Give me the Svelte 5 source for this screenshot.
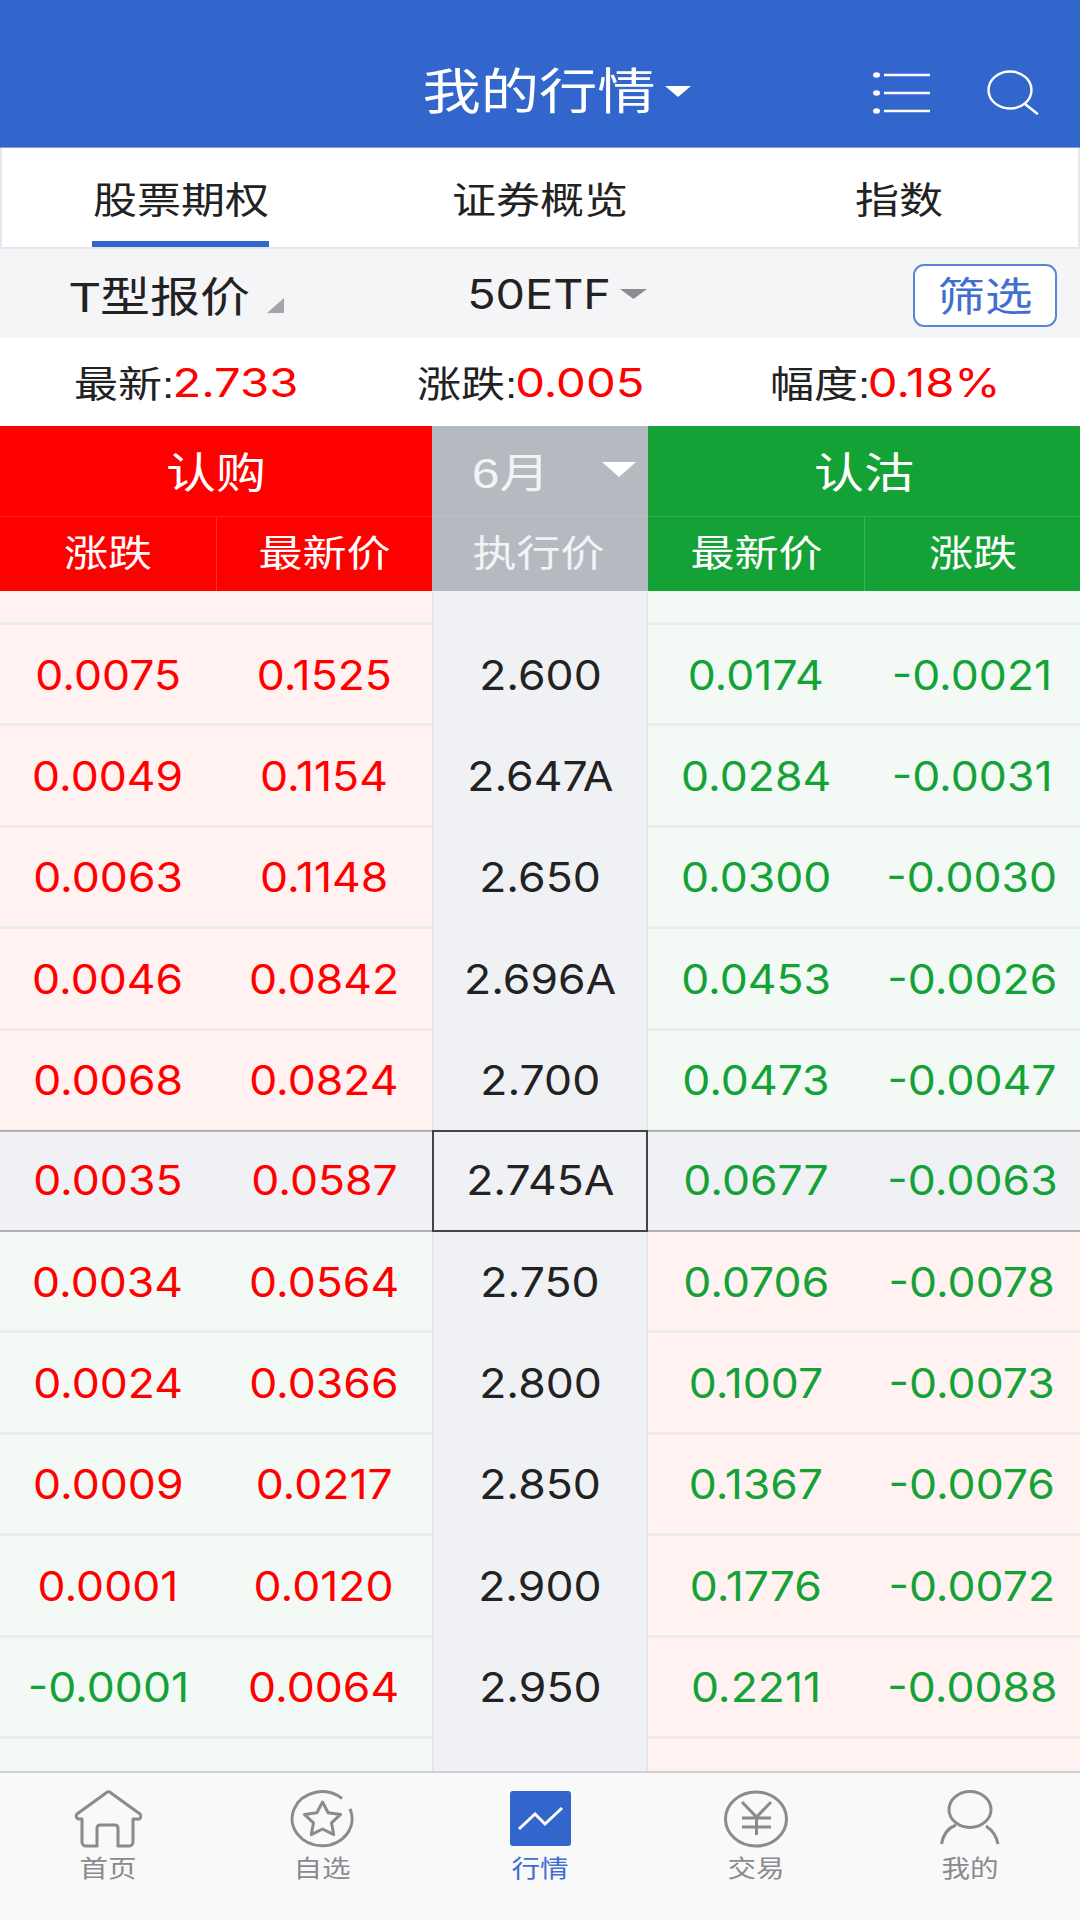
<script lang="ts">
	type Row = { strike: string; callChg: string; callLast: string; putLast: string; putChg: string; atm?: boolean; otm?: boolean };

	const rows: Row[] = [
		{ callChg: '0.0075', callLast: '0.1525', strike: '2.600', putLast: '0.0174', putChg: '-0.0021' },
		{ callChg: '0.0049', callLast: '0.1154', strike: '2.647A', putLast: '0.0284', putChg: '-0.0031' },
		{ callChg: '0.0063', callLast: '0.1148', strike: '2.650', putLast: '0.0300', putChg: '-0.0030' },
		{ callChg: '0.0046', callLast: '0.0842', strike: '2.696A', putLast: '0.0453', putChg: '-0.0026' },
		{ callChg: '0.0068', callLast: '0.0824', strike: '2.700', putLast: '0.0473', putChg: '-0.0047' },
		{ callChg: '0.0035', callLast: '0.0587', strike: '2.745A', putLast: '0.0677', putChg: '-0.0063', atm: true },
		{ callChg: '0.0034', callLast: '0.0564', strike: '2.750', putLast: '0.0706', putChg: '-0.0078', otm: true },
		{ callChg: '0.0024', callLast: '0.0366', strike: '2.800', putLast: '0.1007', putChg: '-0.0073', otm: true },
		{ callChg: '0.0009', callLast: '0.0217', strike: '2.850', putLast: '0.1367', putChg: '-0.0076', otm: true },
		{ callChg: '0.0001', callLast: '0.0120', strike: '2.900', putLast: '0.1776', putChg: '-0.0072', otm: true },
		{ callChg: '-0.0001', callLast: '0.0064', strike: '2.950', putLast: '0.2211', putChg: '-0.0088', otm: true }
	];

	const tone = (v: string) => (v.startsWith('-') ? 'down' : 'up');
</script>

<div class="screen">
	<header class="topbar">
		<div class="title"><span class="x">我的行情</span></div>
		<svg class="title-caret" width="26" height="11" viewBox="0 0 26 11"><path d="M0 0H26L13 11Z" fill="#fff" /></svg>
		<svg class="menu-icon" width="58" height="42" viewBox="0 0 58 42" fill="none" stroke="#fff" stroke-width="2.4">
			<g fill="#fff" stroke="none">
				<ellipse cx="3.5" cy="3" rx="3.5" ry="2.8" />
				<ellipse cx="3.5" cy="21" rx="3.5" ry="2.8" />
				<ellipse cx="3.5" cy="39" rx="3.5" ry="2.8" />
			</g>
			<path d="M11 3H57M11 21H57M11 39H57" />
		</svg>
		<svg class="search-icon" width="52" height="45" viewBox="0 0 52 45" fill="none" stroke="#fff" stroke-width="2.4" stroke-linecap="round">
			<ellipse cx="23" cy="20" rx="21.5" ry="18.5" />
			<path d="M38 34L50 43.500" />
		</svg>
	</header>

	<nav class="tabs">
		<div class="tab tab--on"><span class="x">股票期权</span></div>
		<div class="tab"><span class="x">证券概览</span></div>
		<div class="tab"><span class="x">指数</span></div>
	</nav>

	<div class="filter">
		<div class="filter__type">
			<span class="x">T型报价</span>
			<svg class="corner" width="17" height="15" viewBox="0 0 17 15"><path d="M17 0V15H0Z" fill="#a4a4a9" /></svg>
		</div>
		<div class="filter__under">
			<span class="n">50ETF</span>
			<svg class="under-caret" width="27" height="10" viewBox="0 0 27 10"><path d="M0 0H27L13.500 10Z" fill="#8b8b90" /></svg>
		</div>
		<button class="filter__btn"><span class="x">筛选</span></button>
	</div>

	<div class="quote">
		<div class="quote__item"><span class="x">最新:</span><span class="n">2.733</span></div>
		<div class="quote__item"><span class="x">涨跌:</span><span class="n">0.005</span></div>
		<div class="quote__item"><span class="x">幅度:</span><span class="n">0.18%</span></div>
	</div>

	<div class="thead">
		<div class="thead__top call"><span class="x">认购</span></div>
		<div class="thead__top mid">
			<span class="x month">6月</span>
			<svg class="month-caret" width="34" height="15" viewBox="0 0 34 15"><path d="M0 0H34L17 15Z" fill="#fff" /></svg>
		</div>
		<div class="thead__top put"><span class="x">认沽</span></div>
		<div class="thead__sub call two">
			<div><span class="x">涨跌</span></div>
			<div><span class="x">最新价</span></div>
		</div>
		<div class="thead__sub mid"><span class="x">执行价</span></div>
		<div class="thead__sub put two">
			<div><span class="x">最新价</span></div>
			<div><span class="x">涨跌</span></div>
		</div>
	</div>

	<div class="tbody">
		<div class="row row--stub">
			<div class="side side--pink"></div>
			<div class="strike"></div>
			<div class="side side--green"></div>
		</div>
		{#each rows as r (r.strike)}
			<div class="row" class:row--atm={r.atm}>
				<div class="side" class:side--pink={!r.otm} class:side--green={r.otm}>
					<div class={tone(r.callChg)}><span class="n">{r.callChg}</span></div>
					<div class={tone(r.callLast)}><span class="n">{r.callLast}</span></div>
				</div>
				<div class="strike"><span class="n">{r.strike}</span></div>
				<div class="side" class:side--green={!r.otm} class:side--pink={r.otm}>
					<div class="down"><span class="n">{r.putLast}</span></div>
					<div class="down"><span class="n">{r.putChg}</span></div>
				</div>
			</div>
		{/each}
		<div class="row">
			<div class="side side--green"></div>
			<div class="strike"></div>
			<div class="side side--pink"></div>
		</div>
	</div>

	<footer class="tabbar">
		<div class="tabbar__item">
			<svg width="68" height="58" viewBox="0 0 68 58" fill="none" stroke="#8a8a8f" stroke-width="3" stroke-linejoin="round">
				<path d="M8 29V52a4 4 0 0 0 4 4H23V38a3 3 0 0 1 3-3H41a3 3 0 0 1 3 3V56H55a4 4 0 0 0 4-4V29H63a3 3 0 0 0 3-5L37 3a3 3 0 0 0-5 0L3 24a3 3 0 0 0 2 5Z" />
			</svg>
			<span class="x">首页</span>
		</div>
		<div class="tabbar__item tabbar__item--nudge">
			<svg width="64" height="58" viewBox="0 0 64 58" fill="none" stroke="#8a8a8f" stroke-width="3" stroke-linejoin="round">
				<path d="M52 8.500A30 27 0 1 0 60 18.800" />
				<path d="M32.500 12L38.100 22.700L50.600 24.400L41.500 32.800L43.700 44.600L32.500 39L21.300 44.600L23.500 32.800L14.400 24.400L26.900 22.700Z" />
			</svg>
			<span class="x">自选</span>
		</div>
		<div class="tabbar__item tabbar__item--on">
			<svg width="61" height="58" viewBox="0 0 61 58" fill="none">
				<rect x="0" y="1" width="61" height="55" rx="3" fill="#3366cc" />
				<path d="M9 39L25 24L35 34L52 18" stroke="#fff" stroke-width="3" />
			</svg>
			<span class="x">行情</span>
		</div>
		<div class="tabbar__item">
			<svg width="64" height="58" viewBox="0 0 64 58" fill="none" stroke="#8a8a8f" stroke-width="3">
				<ellipse cx="32" cy="29" rx="30.500" ry="27" />
				<path d="M18 12L32.500 27L47 12M18 28H47M18 37H47M32.500 27V45" />
			</svg>
			<span class="x">交易</span>
		</div>
		<div class="tabbar__item tabbar__item--nudge">
			<svg width="60" height="58" viewBox="0 0 60 58" fill="none" stroke="#8a8a8f" stroke-width="3">
				<ellipse cx="30" cy="19.500" rx="21" ry="18" />
				<path d="M16 35C8 38 3 45 1.500 54M46 36C52 40 56.500 46 58 54" />
			</svg>
			<span class="x">我的</span>
		</div>
	</footer>
</div>

<style>
	:global(body) {
		margin: 0;
		background: #fff;
	}

	.screen {
		width: 1080px;
		height: 1920px;
		display: flex;
		flex-direction: column;
		overflow: hidden;
		font-family: 'Liberation Sans', 'Noto Sans CJK SC', sans-serif;
		color: #222;
	}

	/* the whole reference is stretched sideways, text included */
	.x {
		display: inline-block;
		transform: scaleX(1.19);
		white-space: nowrap;
	}

	/* numbers: Inter has the narrow 1 the reference shows */
	.n {
		display: inline-block;
		transform: scaleX(1.085);
		white-space: nowrap;
		font-family: Inter, 'Liberation Sans', sans-serif;
		font-size: 41px;
	}

	.topbar {
		flex: none;
		height: 148px;
		box-sizing: border-box;
		padding: 36px 41px 0 0;
		display: flex;
		align-items: center;
		background: #3366cc;
		color: #fff;
		border-bottom: 1px solid #7f9fdf;
	}

	.title {
		width: 230px;
		margin-left: 424px;
		text-align: center;
		font-size: 49px;
		line-height: 56px;
	}

	.title-caret {
		margin-left: 11px;
	}

	.menu-icon {
		margin: 2px 56px 0 auto;
	}

	.search-icon {
		margin-top: 2px;
	}

	.tabs {
		flex: none;
		height: 101px;
		box-sizing: border-box;
		display: grid;
		grid-template-columns: repeat(3, 1fr);
		background: #fff;
		border: solid #e6e6f0;
		border-width: 0 2px 2px;
	}

	.tab {
		position: relative;
		display: flex;
		align-items: center;
		justify-content: center;
		font-size: 37px;
	}

	.tab--on::after {
		content: '';
		position: absolute;
		left: 90px;
		bottom: 0;
		width: 177px;
		height: 6px;
		background: #3366cc;
	}

	.filter {
		flex: none;
		height: 89px;
		display: grid;
		grid-template-columns: 432px 216px 1fr;
		align-items: center;
		background: #f5f5f8;
		font-size: 42px;
	}

	.filter__type {
		display: flex;
		align-items: center;
		padding-left: 84px;
	}

	.corner {
		margin: 23px 0 0 31px;
	}

	.filter__under {
		display: flex;
		align-items: center;
		padding-left: 44px;
	}

	.filter__under .n {
		transform: scaleX(1.14);
	}

	.under-caret {
		margin-left: 18px;
	}

	.filter__btn {
		justify-self: end;
		width: 144px;
		height: 63px;
		margin: 4px 23px 0 0;
		padding: 3px 0 0;
		border: 2px solid #5b86d8;
		border-radius: 11px;
		background: #fff;
		color: #3f6fcf;
		font: inherit;
		font-size: 40px;
		line-height: 1;
	}

	.quote {
		flex: none;
		height: 88px;
		display: grid;
		grid-template-columns: 371px 318px 1fr;
		align-items: center;
		background: #fff;
		font-size: 37px;
	}

	.quote__item {
		display: flex;
		align-items: center;
		justify-content: center;
		gap: 16px;
	}

	.quote .n {
		color: #f00;
		font-size: 40px;
		transform: scaleX(1.18);
	}

	.thead {
		flex: none;
		display: grid;
		grid-template-columns: 432px 216px 432px;
		grid-template-rows: 90px 75px;
		color: #fff;
	}

	.thead__top {
		box-sizing: border-box;
		padding-bottom: 3px;
		display: flex;
		align-items: center;
		justify-content: center;
		font-size: 42px;
	}

	.thead__sub {
		box-sizing: border-box;
		padding-bottom: 6px;
		display: flex;
		align-items: center;
		justify-content: center;
		font-size: 37px;
		border-top: 1px solid rgba(255, 255, 255, 0.12);
	}

	.thead__sub.mid {
		padding-right: 4px;
	}

	.two {
		padding-bottom: 0;
		display: grid;
		grid-template-columns: 1fr 1fr;
		align-items: stretch;
	}

	.two > div {
		padding-bottom: 6px;
		display: flex;
		align-items: center;
		justify-content: center;
	}

	.two > div + div {
		border-left: 1px solid rgba(255, 255, 255, 0.18);
	}

	.call {
		background: #f00;
	}

	.mid {
		background: #b5b9c0;
		color: #f2f3f5;
	}

	.put {
		background: #14a236;
	}

	.thead__top.mid {
		justify-content: flex-start;
		padding-left: 46px;
	}

	.month-caret {
		margin-left: 59px;
	}

	.tbody {
		flex: 1;
		min-height: 0;
		overflow: hidden;
		display: flex;
		flex-direction: column;
	}

	.row {
		flex: none;
		height: 101.4px;
		display: grid;
		grid-template-columns: 432px 216px 432px;
	}

	.row--stub {
		height: 34px;
	}

	.side {
		box-sizing: border-box;
		padding-top: 3px;
		display: grid;
		grid-template-columns: 1fr 1fr;
		border-bottom: 3px solid #ececec;
	}

	.side > div {
		padding-bottom: 2px;
		display: flex;
		align-items: center;
		justify-content: center;
	}

	.side--pink {
		background: #fff2f1;
	}

	.side--green {
		background: #f3faf5;
	}

	.up {
		color: #f00;
	}

	.down {
		color: #14a236;
	}

	.strike {
		box-sizing: border-box;
		padding-bottom: 2px;
		display: flex;
		align-items: center;
		justify-content: center;
		background: #f0f1f4;
		border: solid #e6e6e6;
		border-width: 0 2px;
	}

	.row--atm {
		background: #f0f1f4;
		margin-top: -2px;
		height: 102px;
	}

	.row--atm .side {
		padding-top: 0;
		background: #f0f1f4;
		border-top: 2px solid #b0b0b0;
		border-bottom: 2px solid #b0b0b0;
	}

	.row--atm .strike {
		border: 2px solid #444;
	}

	.tabbar {
		flex: none;
		height: 149px;
		box-sizing: border-box;
		padding-top: 17px;
		display: grid;
		grid-template-columns: repeat(5, 1fr);
		align-items: start;
		background: #f9f9f9;
		border-top: 2px solid #cfcfcf;
		color: #8a8a8f;
		font-size: 24px;
		line-height: 30px;
	}

	.tabbar__item {
		display: flex;
		flex-direction: column;
		align-items: center;
		gap: 6px;
	}

	.tabbar__item--nudge {
		margin-left: -4px;
	}

	.tabbar__item--on {
		color: #3f6fcf;
	}
</style>
